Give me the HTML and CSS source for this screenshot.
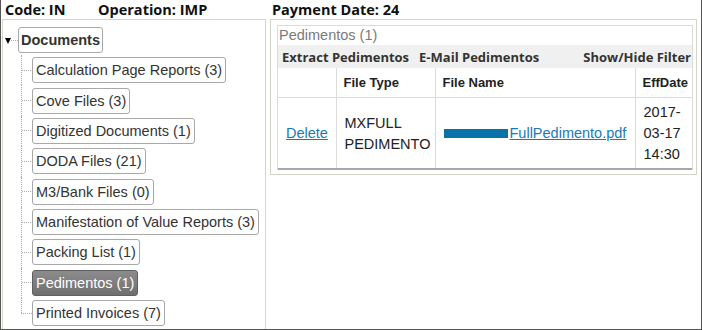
FILE: index.html
```html
<!DOCTYPE html>
<html lang="en">
<head>
    <meta charset="UTF-8">
    <title>Documents</title>
    <link rel="stylesheet" href="styles.css">
</head>
<body>
    <div class="frame">
        <div class="info">
            <span class="info-code">Code: IN</span>
            <span class="info-op">Operation: IMP</span>
            <span>Payment Date: 24</span>
        </div>

        <div class="panes">
            <div class="tree">
                <div class="root">
                    <span class="toggle"></span>
                    <span class="root-link"></span>
                    <span class="node node-root">Documents</span>
                </div>
                <ul class="children">
                    <li><span class="link"></span><span class="node">Calculation Page Reports (3)</span></li>
                    <li><span class="link"></span><span class="node">Cove Files (3)</span></li>
                    <li><span class="link"></span><span class="node">Digitized Documents (1)</span></li>
                    <li><span class="link"></span><span class="node">DODA Files (21)</span></li>
                    <li><span class="link"></span><span class="node">M3/Bank Files (0)</span></li>
                    <li><span class="link"></span><span class="node">Manifestation of Value Reports (3)</span></li>
                    <li><span class="link"></span><span class="node">Packing List (1)</span></li>
                    <li><span class="link"></span><span class="node selected">Pedimentos (1)</span></li>
                    <li><span class="link"></span><span class="node">Printed Invoices (7)</span></li>
                </ul>
            </div>

            <div class="content">
                <div class="panel">
                    <div class="grid">
                        <div class="grid-title">Pedimentos (1)</div>
                        <div class="toolbar">
                            <a>Extract Pedimentos</a>
                            <a>E-Mail Pedimentos</a>
                            <a class="toolbar-right">Show/Hide Filter</a>
                        </div>
                        <table>
                            <colgroup>
                                <col class="col-action">
                                <col class="col-type">
                                <col class="col-name">
                                <col class="col-date">
                            </colgroup>
                            <thead>
                                <tr>
                                    <th></th>
                                    <th>File Type</th>
                                    <th>File Name</th>
                                    <th>EffDate</th>
                                </tr>
                            </thead>
                            <tbody>
                                <tr>
                                    <td><a href="#">Delete</a></td>
                                    <td>MXFULL<br>PEDIMENTO</td>
                                    <td><a href="#" class="file"><span class="file-icon"></span>FullPedimento.pdf</a></td>
                                    <td>2017-<br>03-17<br>14:30</td>
                                </tr>
                            </tbody>
                        </table>
                    </div>
                </div>
            </div>
        </div>
    </div>
</body>
</html>
```

FILE: styles.css
```css
body {
    margin: 0;
    background: #fff;
    font-family: "Liberation Sans", Arial, sans-serif;
    color: #222;
}

.frame {
    width: 702px;
    height: 330px;
    box-sizing: border-box;
    border: 1px solid #555;
    border-top: none;
    display: flex;
    flex-direction: column;
    overflow: hidden;
}

/* header line */
.info {
    height: 19px;
    display: flex;
    align-items: center;
    padding-left: 4px;
    font-family: "Open Sans", sans-serif;
    font-weight: 700;
    font-size: 14.5px;
    color: #111;
    white-space: nowrap;
}

.info-code {
    width: 93px;
}

.info-op {
    width: 174px;
}

.panes {
    flex: 1;
    display: flex;
    min-height: 0;
}

/* left tree */
.tree {
    width: 262px;
    flex-shrink: 0;
    margin-left: 1px;
    border: 1px solid #d6d3c9;
    border-bottom: none;
    padding: 7px 0 0 0;
    font-size: 14.5px;
}

.root {
    display: flex;
    align-items: center;
    height: 26px;
}

.toggle {
    width: 0;
    height: 0;
    margin: 1px 0 0 2px;
    border-left: 3.5px solid transparent;
    border-right: 3.5px solid transparent;
    border-top: 6px solid #000;
}

.root-link {
    width: 7px;
    border-top: 1px dotted #aaa;
}

.node {
    display: inline-block;
    height: 24px;
    line-height: 24px;
    padding: 0 3px;
    border: 1px solid #a8a8a8;
    border-radius: 3px;
    background: #fff;
    color: #333;
    white-space: nowrap;
}

.node-root {
    font-weight: 700;
    padding: 0 2px;
}

.selected {
    background: linear-gradient(#8c8c8c, #6f6f6f);
    border-color: #5f5f5f;
    color: #fff;
}

.children {
    list-style: none;
    margin: 2px 0 0 18px;
    padding: 0;
}

.children li {
    display: flex;
    align-items: center;
    height: 30.375px;
}

/* dotted rail + connector for each child */
.link {
    align-self: stretch;
    width: 10px;
    border-left: 1px dotted #aaa;
    background: repeating-linear-gradient(to right, #aaa 0 1px, transparent 1px 2px) left center / 100% 1px no-repeat;
}

.children li:last-child .link {
    border-left: none;
    margin-left: 1px;
    width: 10px;
    background:
        repeating-linear-gradient(to right, #aaa 0 1px, transparent 1px 2px) left center / 100% 1px no-repeat,
        repeating-linear-gradient(to bottom, #aaa 0 1px, transparent 1px 2px) left top / 1px 50% no-repeat;
}

.children li:last-child .link {
    margin-left: 0;
    width: 11px;
}

/* right side */
.content {
    flex: 1;
    padding-left: 4px;
}

.panel {
    width: 416px;
    border: 1px solid #d6d3c9;
    padding: 5px 3px 4px 6px;
}

.grid {
    border: 1px solid #dcdcdc;
    border-bottom: none;
}

.grid-title {
    height: 19px;
    line-height: 19px;
    padding-left: 1px;
    color: #7a7a7a;
    font-size: 14.5px;
}

.toolbar {
    display: flex;
    gap: 10px;
    height: 23px;
    align-items: center;
    background: #f0f0f0;
    padding: 0 1px 0 4px;
    font-family: "Open Sans", sans-serif;
    font-weight: 700;
    font-size: 13px;
    color: #333;
    white-space: nowrap;
}

.toolbar-right {
    margin-left: auto;
}

table {
    width: 100%;
    table-layout: fixed;
    border-collapse: collapse;
    font-size: 14.5px;
}

.col-action { width: 58px; }
.col-type { width: 99px; }
.col-name { width: 200px; }

th {
    height: 29px;
    text-align: left;
    padding: 0 7px;
    font-size: 13px;
    color: #222;
    border-left: 1px solid #dcdcdc;
    border-bottom: 1px solid #dcdcdc;
}

th:first-child,
td:first-child {
    border-left: none;
}

td {
    padding: 4px 7px 3px 8px;
    line-height: 21px;
    border-left: 1px solid #dcdcdc;
    border-bottom: 2px solid #a8a8a8;
    color: #222;
    white-space: nowrap;
}

td a {
    color: #1a7ab5;
}

.file-icon {
    display: inline-block;
    width: 64px;
    height: 9px;
    margin-right: 2px;
    background: #0872a9;
}
```
